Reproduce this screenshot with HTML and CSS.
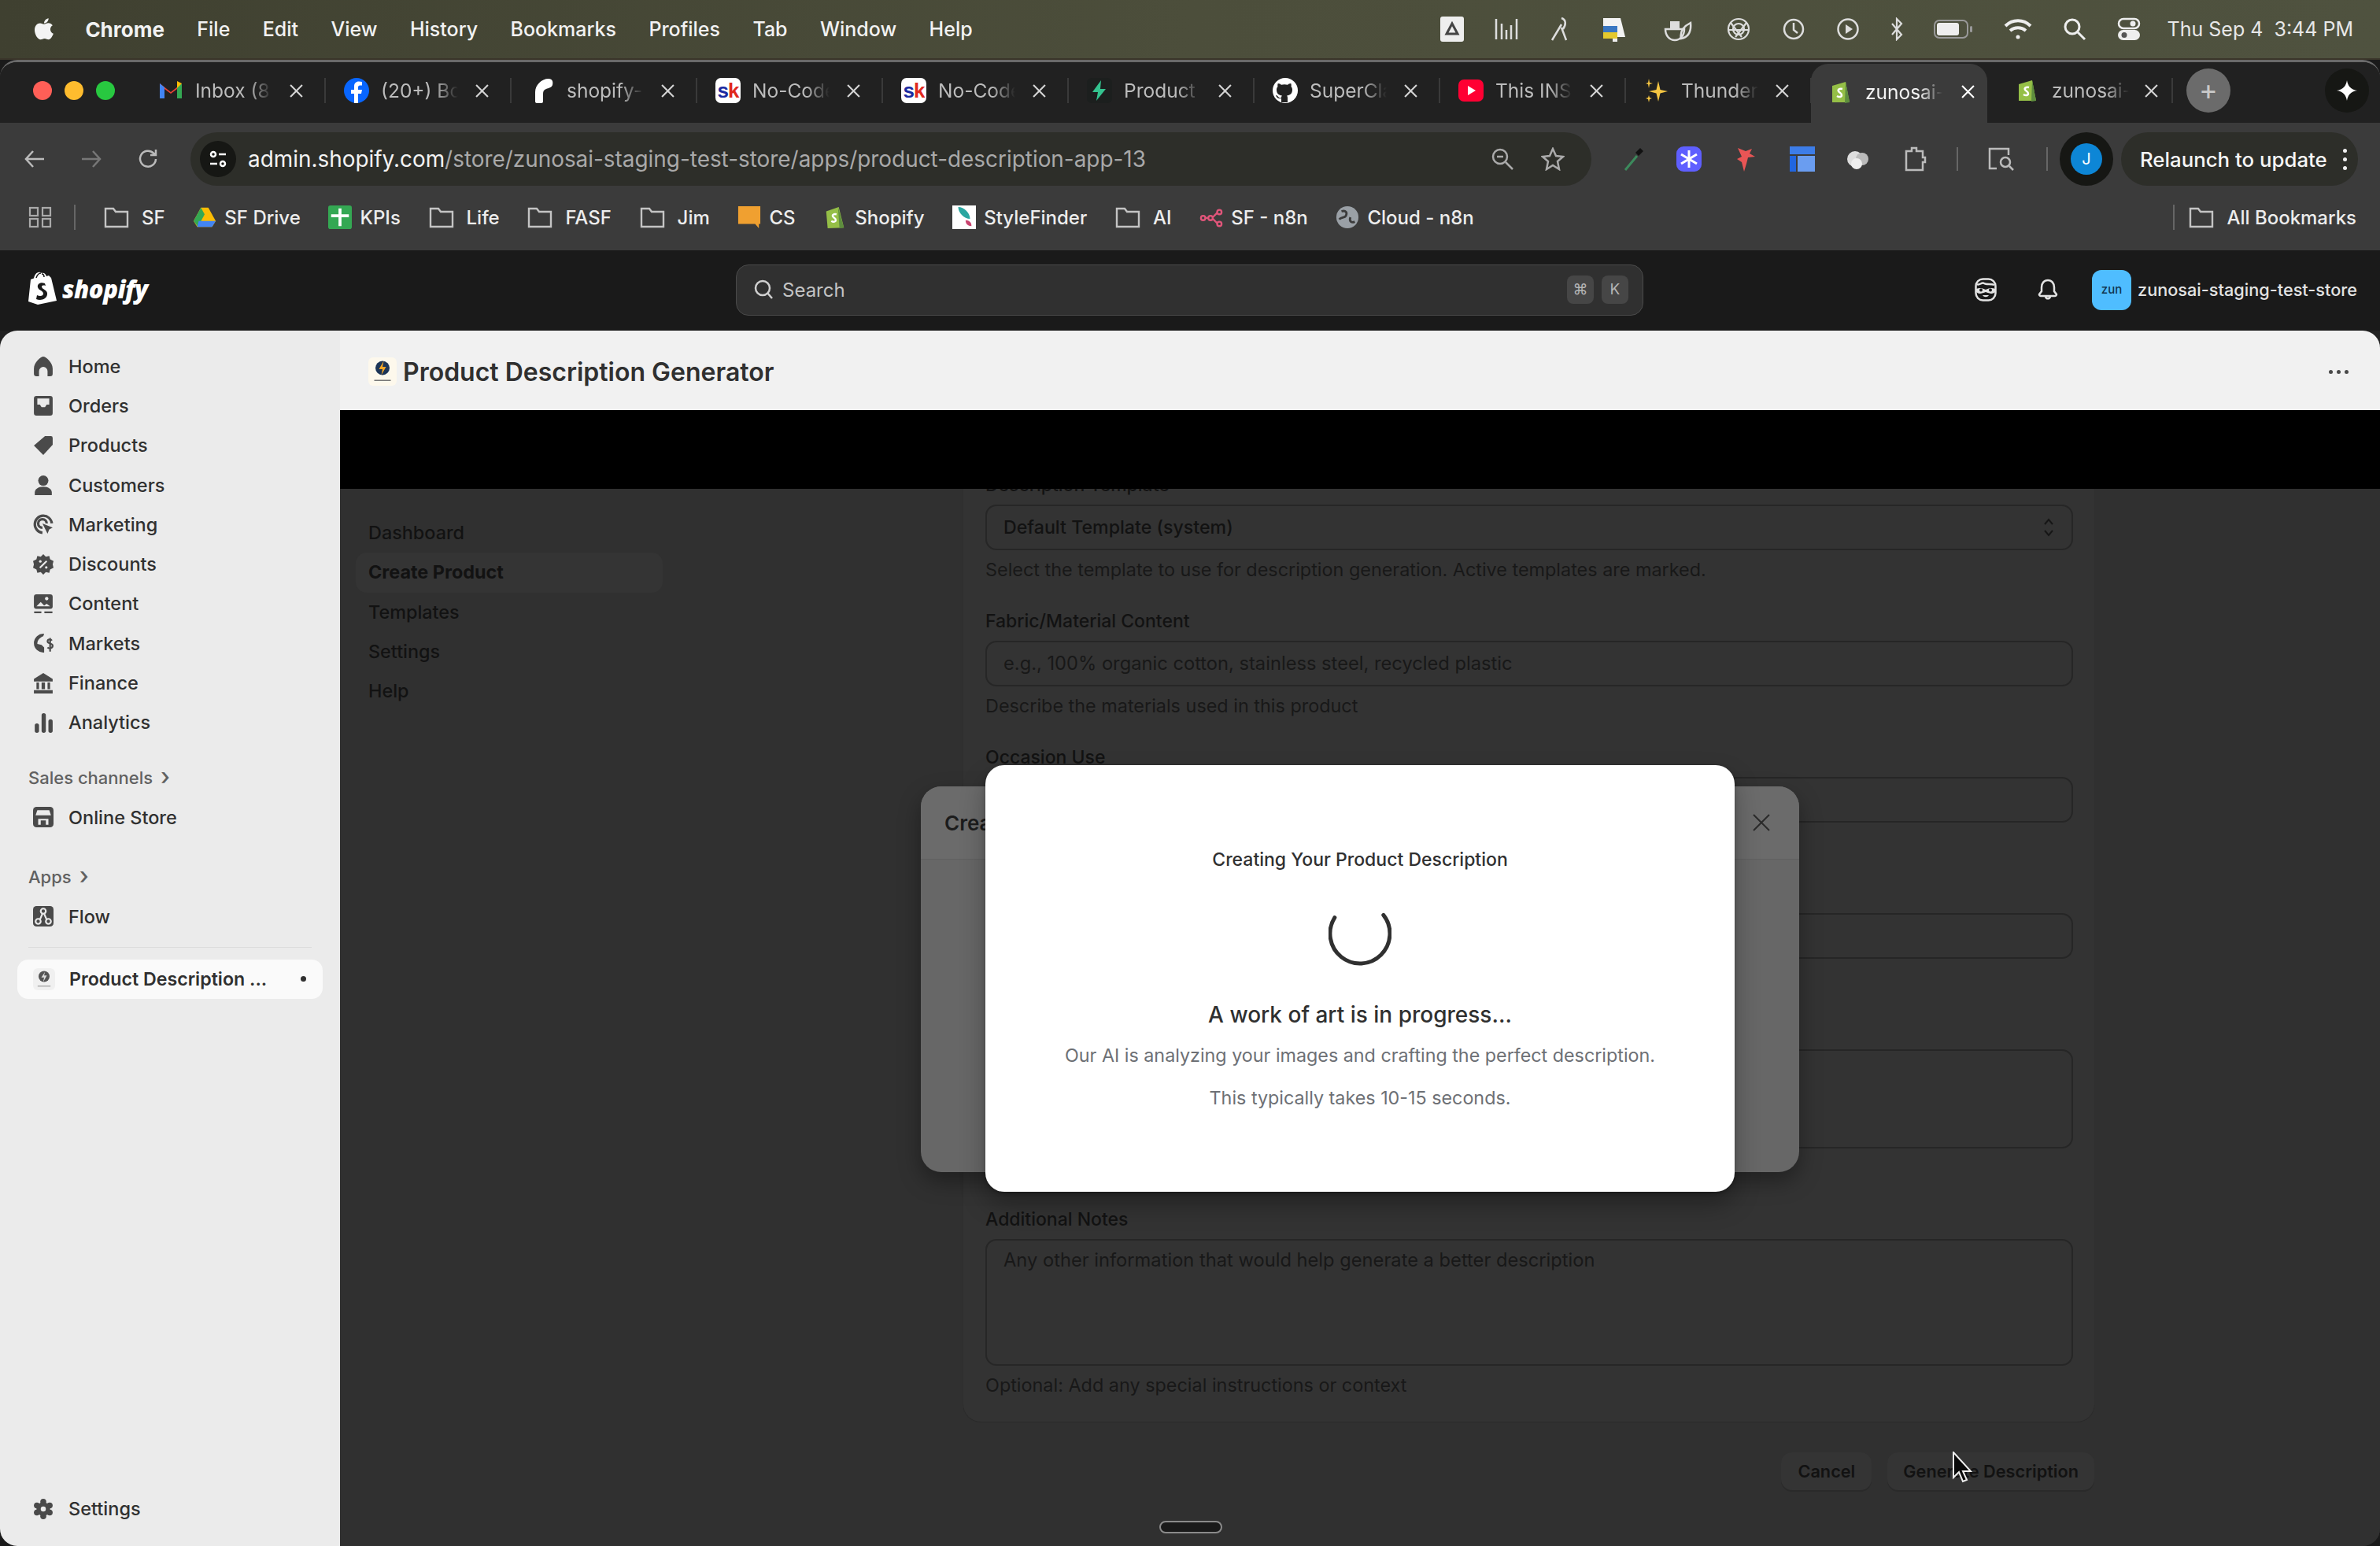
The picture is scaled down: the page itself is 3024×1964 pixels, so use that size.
FILE: index.html
```html
<!DOCTYPE html>
<html>
<head>
  <title>Product Description Generator</title>
  <link rel="stylesheet" href="styles.css">
</head>
<body>

  <div class="menubar">
    <svg class="apple" viewBox="0 0 24 28"><path d="M17 2c0 3-2.200 5.500-5 5.500C12 4.500 14.400 2.300 17 2zM12 8.500c1.300 0 2.700-1.200 4.800-1.200 1.800 0 3.600.9 4.700 2.500-3.800 2.200-3.200 7.600.9 9.200-1.100 2.800-3.100 6.500-5.400 6.500-1.700 0-2.400-1.100-4.400-1.100s-2.800 1.100-4.400 1.100C4.700 25.500 1.500 19.500 1.500 15c0-4.700 3-7.600 6-7.600 1.900 0 3.300 1.100 4.500 1.100z"/></svg>
    <span class="app-name">Chrome</span>
    <span>File</span><span>Edit</span><span>View</span><span>History</span><span>Bookmarks</span><span>Profiles</span><span>Tab</span><span>Window</span><span>Help</span>
    <div class="status">
      <svg width="30" height="32" viewBox="0 0 30 32"><rect x="0" y="0" width="30" height="32" rx="3" fill="#eee"/><path d="M15 9l7 13H8z" fill="none" stroke="#444" stroke-width="3"/></svg>
      <svg width="30" height="30" viewBox="0 0 30 30" fill="none" stroke="#ddd" stroke-width="2.500"><path d="M2 2v26M9 8v20M15 16v12M21 10v18M28 2v26"/></svg>
      <svg width="28" height="32" viewBox="0 0 28 32" fill="none" stroke="#ddd" stroke-width="2.500"><path d="M4 30L16 10M16 2c6 2 6 8 2 14M16 14l6 16"/></svg>
      <svg width="32" height="32" viewBox="0 0 32 32"><path d="M2 2h22l6 24H2z" fill="#f3f3f3"/><rect x="2" y="12" width="18" height="8" fill="#3a77c2"/><rect x="2" y="20" width="18" height="8" fill="#e4c92e"/><path d="M14 28h6v4h-6z" fill="#eee"/></svg>
      <svg class="status-wide" width="36" height="32" viewBox="0 0 36 32"><rect x="8" y="6" width="12" height="10" fill="#ddd"/><path d="M2 16h24c0 8-5 14-12 14S2 24 2 16z" fill="none" stroke="#ddd" stroke-width="2.500"/><path d="M22 28c-2-10 4-16 12-20 1 10-2 18-12 20z" fill="none" stroke="#ddd" stroke-width="2.500"/></svg>
      <svg class="status-wide-2" width="32" height="32" viewBox="0 0 32 32" fill="none" stroke="#ddd" stroke-width="2.200"><circle cx="16" cy="16" r="13"/><circle cx="16" cy="16" r="7"/><path d="M6 8l14 18M26 8L12 26M3 17h26"/></svg>
      <svg width="30" height="30" viewBox="0 0 30 30" fill="none" stroke="#ddd" stroke-width="2.500"><circle cx="15" cy="15" r="12"/><path d="M15 7v9l5 4"/></svg>
      <svg width="30" height="30" viewBox="0 0 30 30"><circle cx="15" cy="15" r="12.500" fill="none" stroke="#ddd" stroke-width="2.500"/><path d="M12 9l9 6-9 6z" fill="#ddd"/></svg>
      <svg width="16" height="30" viewBox="0 0 16 30" fill="none" stroke="#ddd" stroke-width="2.200"><path d="M2 8l12 14-6 6V2l6 6L2 22"/></svg>
      <svg width="50" height="26" viewBox="0 0 50 26"><rect x="1" y="2" width="42" height="22" rx="6" fill="none" stroke="#999" stroke-width="2"/><rect x="4" y="5" width="28" height="16" rx="3" fill="#eee"/><rect x="46" y="9" width="3" height="8" rx="1.500" fill="#999"/></svg>
      <svg width="36" height="28" viewBox="0 0 36 28" fill="none" stroke="#eee" stroke-width="4"><path d="M2 10c9-9 23-9 32 0M8 16c6-5 14-5 20 0"/><circle cx="18" cy="24" r="2.500" fill="#eee" stroke="none"/></svg>
      <svg width="30" height="30" viewBox="0 0 30 30" fill="none" stroke="#eee" stroke-width="3"><circle cx="12" cy="12" r="9"/><path d="M19 19l9 9"/></svg>
      <svg width="30" height="30" viewBox="0 0 30 30"><rect x="2" y="2" width="26" height="12" rx="6" fill="none" stroke="#eee" stroke-width="2.500"/><circle cx="20" cy="8" r="3.500" fill="#eee"/><rect x="1" y="16" width="28" height="13" rx="6.500" fill="#eee"/><circle cx="9" cy="22.500" r="3.500" fill="#555"/></svg>
      <span class="clock">Thu Sep 4&nbsp;&nbsp;3:44 PM</span>
    </div>
  </div>

  <div class="wallpaper"></div>

  <div class="window">
    <div class="tabstrip">
      <div class="lights"><i class="red"></i><i class="yellow"></i><i class="green"></i></div>

      <div class="tab">
        <svg class="fav" viewBox="0 0 32 32"><path d="M2 26V7l14 11L30 7v19h-6V14l-8 6-8-6v12z" fill="#ea4335"/><path d="M2 7v19h6V12z" fill="#4285f4"/><path d="M30 7v19h-6V12z" fill="#34a853"/><path d="M24 4l6 3-6 6z" fill="#fbbc04"/></svg>
        <span class="tab-title">Inbox (8</span><svg class="tab-x" viewBox="0 0 16 16"><path d="M1 1l14 14M15 1L1 15"/></svg>
      </div>
      <div class="tab">
        <svg class="fav" viewBox="0 0 32 32"><circle cx="16" cy="16" r="16" fill="#0866ff"/><path d="M18 32V20h4l1-5h-5v-3c0-1.500.7-2.500 2.500-2.500H23V5c-1-.2-2.500-.4-4-.4-3.800 0-6 2.300-6 6.200V15H9v5h4v12z" fill="#fff"/></svg>
        <span class="tab-title">(20+) Bo</span><svg class="tab-x" viewBox="0 0 16 16"><path d="M1 1l14 14M15 1L1 15"/></svg>
      </div>
      <div class="tab">
        <svg class="fav" viewBox="0 0 32 32"><path d="M24 1c5 0 6 4 5 8-1 3-5 4-8 5-3 1-4 3-4 6v10c0 1-1 2-2 2H9c-1 0-2-1-2-2V18C7 9 15 1 24 1z" fill="#fff"/></svg>
        <span class="tab-title">shopify-</span><svg class="tab-x" viewBox="0 0 16 16"><path d="M1 1l14 14M15 1L1 15"/></svg>
      </div>
      <div class="tab">
        <span class="fav fav-sk"><b class="s">s</b><b class="k">k</b></span>
        <span class="tab-title">No-Code</span><svg class="tab-x" viewBox="0 0 16 16"><path d="M1 1l14 14M15 1L1 15"/></svg>
      </div>
      <div class="tab">
        <span class="fav fav-sk"><b class="s">s</b><b class="k">k</b></span>
        <span class="tab-title">No-Code</span><svg class="tab-x" viewBox="0 0 16 16"><path d="M1 1l14 14M15 1L1 15"/></svg>
      </div>
      <div class="tab">
        <svg class="fav" viewBox="0 0 32 32"><rect width="32" height="32" rx="6" fill="#1c1f1e"/><path d="M18 3L7 18h7l-2 11 12-15h-7z" fill="#34c38f"/></svg>
        <span class="tab-title">Product</span><svg class="tab-x" viewBox="0 0 16 16"><path d="M1 1l14 14M15 1L1 15"/></svg>
      </div>
      <div class="tab">
        <svg class="fav" viewBox="0 0 32 32"><circle cx="16" cy="16" r="16" fill="#fff"/><path d="M11 31v-5c-5 1-6-2-7-4 2 0 3 2 4 3 1 .5 2 .5 3 0 0-1 .5-2 1-2.500-4-.5-7-2.500-7-7.500 0-1.800.6-3 1.500-4-.2-.8-.4-2.300.2-4 2 0 3.500 1 4.300 1.700 2.500-.7 5.500-.7 8 0 .8-.7 2.300-1.700 4.300-1.700.6 1.700.4 3.200.2 4 .9 1 1.500 2.200 1.500 4 0 5-3 7-7 7.500.7.700 1 1.800 1 3V31z" fill="#212121"/></svg>
        <span class="tab-title">SuperCla</span><svg class="tab-x" viewBox="0 0 16 16"><path d="M1 1l14 14M15 1L1 15"/></svg>
      </div>
      <div class="tab">
        <svg class="fav" viewBox="0 0 32 32"><rect y="2" width="32" height="28" rx="7" fill="#ff0033"/><path d="M12 10l10 6-10 6z" fill="#fff"/></svg>
        <span class="tab-title">This INS</span><svg class="tab-x" viewBox="0 0 16 16"><path d="M1 1l14 14M15 1L1 15"/></svg>
      </div>
      <div class="tab">
        <svg class="fav" viewBox="0 0 32 32" fill="#f4c542"><path d="M18 4l2.500 11L30 17l-9.500 2.500L18 30l-2.500-10.500L6 17l9.500-2z"/><path d="M6 1l1 5 4 1-4 1-1 5-1-5-3-1 3-1z"/><path d="M6 22l1 3 3 1-3 1-1 4-1-4-3-1 3-1z"/></svg>
        <span class="tab-title">Thunder</span><svg class="tab-x" viewBox="0 0 16 16"><path d="M1 1l14 14M15 1L1 15"/></svg>
      </div>
      <div class="tab tab-active">
        <svg class="fav" viewBox="0 0 32 32"><path d="M5 8l17-5 5 26-22 0z" fill="#95bf47"/><path d="M22 3l5 26-6 1z" fill="#5e8e3e"/><path d="M18 12c-4-1-6 1-5 3 1 2 4 2 4 5 0 2-3 3-6 1" fill="none" stroke="#fff" stroke-width="2.500"/></svg>
        <span class="tab-title">zunosai-</span><svg class="tab-x" viewBox="0 0 16 16"><path d="M1 1l14 14M15 1L1 15"/></svg>
      </div>
      <div class="tab tab-last">
        <svg class="fav" viewBox="0 0 32 32"><path d="M5 8l17-5 5 26-22 0z" fill="#95bf47"/><path d="M22 3l5 26-6 1z" fill="#5e8e3e"/><path d="M18 12c-4-1-6 1-5 3 1 2 4 2 4 5 0 2-3 3-6 1" fill="none" stroke="#fff" stroke-width="2.500"/></svg>
        <span class="tab-title">zunosai-</span><svg class="tab-x" viewBox="0 0 16 16"><path d="M1 1l14 14M15 1L1 15"/></svg>
      </div>
      <div class="new-tab">+</div>
      <div class="gemini">
        <svg width="26" height="26" viewBox="0 0 26 26"><path d="M13 0c1 7 5 12 13 13-8 1-12 6-13 13-1-7-5-12-13-13 8-1 12-6 13-13z" fill="#fff"/></svg>
      </div>
    </div>

    <div class="toolbar">
      <svg class="nav-btn" width="28" height="28" viewBox="0 0 28 28" fill="none" stroke="#bbb" stroke-width="2.500"><path d="M26 14H3M12 4L3 14l9 10"/></svg>
      <svg class="nav-btn" width="28" height="28" viewBox="0 0 28 28" fill="none" stroke="#777" stroke-width="2.500"><path d="M2 14h23M16 4l9 10-9 10"/></svg>
      <svg class="nav-btn" width="28" height="28" viewBox="0 0 28 28" fill="none" stroke="#bbb" stroke-width="2.500"><path d="M24 14a10 10 0 1 1-3-7.500l3 2.500M24 2v7h-7"/></svg>
      <div class="omnibox">
        <span class="site-info">
          <svg width="24" height="24" viewBox="0 0 24 24" fill="none" stroke="#fff" stroke-width="2.500"><circle cx="6" cy="6" r="3"/><path d="M13 6h9M2 18h9"/><circle cx="18" cy="18" r="3"/></svg>
        </span>
        <span class="url">admin.shopify.com<em>/store/zunosai-staging-test-store/apps/product-description-app-13</em></span>
        <svg class="omni-icon" width="30" height="30" viewBox="0 0 30 30" fill="none" stroke="#aaa" stroke-width="2.500"><circle cx="12" cy="12" r="9"/><path d="M19 19l9 9M8 12h8"/></svg>
        <svg class="omni-icon" width="30" height="30" viewBox="0 0 30 30" fill="none" stroke="#aaa" stroke-width="2.500"><path d="M15 2l4 9 9 1-7 6 2 10-8-5-8 5 2-10-7-6 9-1z"/></svg>
      </div>
      <div class="extensions">
        <svg width="28" height="32" viewBox="0 0 28 32"><path d="M3 30L18 12" stroke="#3c8a5c" stroke-width="3"/><path d="M16 8l6-6 4 4-6 6z" fill="#111"/></svg>
        <svg width="32" height="32" viewBox="0 0 32 32"><rect width="32" height="32" rx="9" fill="#5f5fff"/><path d="M16 5v22M6 10l20 12M26 10L6 22" stroke="#fff" stroke-width="3"/></svg>
        <svg width="32" height="34" viewBox="0 0 32 34"><path d="M6 3l10 4 8-3-3 6 7 4-9 1-2 8-3 10-3-12-6-4 6-3z" fill="#e95555"/></svg>
        <svg width="32" height="32" viewBox="0 0 32 32"><rect width="32" height="10" fill="#3d7de8"/><rect y="12" width="8" height="20" fill="#2166e0"/><rect x="10" y="12" width="22" height="20" fill="#6a9df0"/></svg>
        <svg width="32" height="32" viewBox="0 0 32 32"><circle cx="11" cy="16" r="10" fill="#ddd"/><circle cx="20" cy="16" r="8" fill="#bbb"/><circle cx="13" cy="22" r="7" fill="#eee"/></svg>
        <svg width="30" height="32" viewBox="0 0 30 32" fill="none" stroke="#bbb" stroke-width="2.500"><path d="M4 6h7V2h6v4h8v8h3v6h-3v10H4z"/></svg>
        <i class="tool-sep"></i>
        <svg width="36" height="32" viewBox="0 0 36 32" fill="none" stroke="#bbb" stroke-width="2.500"><path d="M11 28H2V3h24v8"/><circle cx="22" cy="20" r="6"/><path d="M27 25l5 5"/></svg>
        <i class="tool-sep"></i>
      </div>
      <span class="profile"><b>J</b></span>
      <div class="relaunch">Relaunch to update<span class="kebab"><i></i><i></i><i></i></span></div>
    </div>

    <div class="bookmarks">
      <svg class="apps-grid" width="32" height="28" viewBox="0 0 32 28" fill="none" stroke="#aaa" stroke-width="2.200"><rect x="2" y="2" width="10" height="10"/><rect x="18" y="2" width="10" height="10"/><rect x="2" y="16" width="10" height="10"/><rect x="18" y="16" width="10" height="10"/></svg>
      <i class="bm-sep"></i>
      <span class="bm"><svg class="folder" viewBox="0 0 32 28"><path d="M2 3h10l3 4h15v19H2z"/></svg>SF</span>
      <span class="bm"><svg class="bm-icon" viewBox="0 0 32 28"><path d="M11 1h10l10 18-5 8H6l-5-8z" fill="#fbbc04"/><path d="M11 1l5 9-9 17-6-8z" fill="#34a853"/><path d="M8 19h23l-5 8H6z" fill="#4285f4"/></svg>SF Drive</span>
      <span class="bm"><svg class="bm-icon" viewBox="0 0 32 32"><rect width="32" height="32" rx="3" fill="#34a853"/><path d="M14 4h4v24h-4zM4 12h24v4H4z" fill="#fff"/></svg>KPIs</span>
      <span class="bm"><svg class="folder" viewBox="0 0 32 28"><path d="M2 3h10l3 4h15v19H2z"/></svg>Life</span>
      <span class="bm"><svg class="folder" viewBox="0 0 32 28"><path d="M2 3h10l3 4h15v19H2z"/></svg>FASF</span>
      <span class="bm"><svg class="folder" viewBox="0 0 32 28"><path d="M2 3h10l3 4h15v19H2z"/></svg>Jim</span>
      <span class="bm"><svg class="bm-icon" viewBox="0 0 32 32"><path d="M1 1h30v24h-2v6l-5-6H1z" fill="#f0a030"/></svg>CS</span>
      <span class="bm"><svg class="bm-icon" viewBox="0 0 32 32"><path d="M4 8l17-6 7 28-22 1z" fill="#95bf47"/><path d="M20 2l8 28-6 1z" fill="#5e8e3e"/><path d="M18 12c-4-1-6 1-5 3 1 2 4 2 4 5 0 2-3 3-6 1" fill="none" stroke="#fff" stroke-width="2.500"/></svg>Shopify</span>
      <span class="bm"><svg class="bm-icon" viewBox="0 0 32 32"><rect width="32" height="32" fill="#fff"/><path d="M8 2c8 0 16 8 16 16-8 0-16-8-16-16z" fill="#2aa6a0"/><path d="M18 20c5 0 8 3 8 8-5 0-8-3-8-8z" fill="#c9446f"/></svg>StyleFinder</span>
      <span class="bm"><svg class="folder" viewBox="0 0 32 28"><path d="M2 3h10l3 4h15v19H2z"/></svg>AI</span>
      <span class="bm"><svg class="bm-icon" viewBox="0 0 32 32" fill="none" stroke="#e0557a" stroke-width="2.500"><circle cx="5" cy="17" r="3"/><circle cx="15" cy="17" r="3"/><circle cx="27" cy="9" r="3"/><circle cx="27" cy="25" r="3"/><path d="M8 17h4M18 16l6-6M18 18l6 6"/></svg>SF - n8n</span>
      <span class="bm"><svg class="bm-icon" viewBox="0 0 32 32"><circle cx="16" cy="16" r="15" fill="#9aa0a6"/><path d="M8 8c6-2 8 2 6 6-2 3-7 2-9 5M26 22c-4 2-8 0-6-6" fill="none" stroke="#3b3b3b" stroke-width="3"/></svg>Cloud - n8n</span>
      <i class="bm-sep bm-sep-right"></i>
      <span class="bm"><svg class="folder" viewBox="0 0 32 28"><path d="M2 3h10l3 4h15v19H2z"/></svg>All Bookmarks</span>
    </div>

    <div class="topbar">
      <div class="logo">
        <svg width="38" height="44" viewBox="0 0 38 44"><path d="M3 10l4-1.500C8 4 11 0 15 1c1 .1 1.500.5 2 1 3-1 5 1 6 4l3-1 3 3 7 29-24 5L0 38z" fill="#fff"/><path d="M21 15c-6-2-10 1-9 5 1 4 7 4 7 8 0 3-4 4-8 2l-1 5c5 2 13 1 14-6 1-6-7-6-7-10 0-1 2-2 5-1z" fill="#1a1a1a"/><path d="M10 8c1-3 3-6 6-6M17 3c2 0 3 2 3 4" fill="none" stroke="#1a1a1a" stroke-width="1.500"/></svg>
        <span class="wordmark">shopify</span>
      </div>
      <div class="search">
        <svg width="26" height="26" viewBox="0 0 26 26" fill="none" stroke="#d0d0d0" stroke-width="2.500"><circle cx="11" cy="11" r="9"/><path d="M17 17l6 7"/></svg>
        <span class="search-text">Search</span>
        <span class="key">⌘</span><span class="key">K</span>
      </div>
      <div class="top-right">
        <svg width="28" height="30" viewBox="0 0 28 30"><rect x="1.500" y="1.500" width="25" height="27" rx="9" fill="none" stroke="#e3e3e3" stroke-width="2.500"/><path d="M3 8c3 2 6-3 9-1 3 2 9 0 13 2" fill="none" stroke="#e3e3e3" stroke-width="2.500"/><path d="M2 14c4-2 8-1 12 1 4-2 8-3 12-1v4c-3 3-7 2-12 0-5 2-9 3-12 0z" fill="#e3e3e3"/><circle cx="8" cy="15.500" r="2" fill="#1a1a1a"/><circle cx="20" cy="15.500" r="2" fill="#1a1a1a"/><path d="M10 22c2 3 6 3 8 0z" fill="#e3e3e3"/></svg>
        <svg width="28" height="30" viewBox="0 0 28 30" fill="none" stroke="#e3e3e3" stroke-width="2.500"><path d="M14 3c5 0 8 4 8 9v5l3 4c0 1-1 2-2 2H5c-1 0-2-1-2-2l3-4v-5c0-5 3-9 8-9zM11 24c1 3 5 3 6 0"/></svg>
        <div class="store">
          <span class="store-badge">zun</span>
          <span>zunosai-staging-test-store</span>
        </div>
      </div>
    </div>

    <div class="admin">
      <div class="sidebar">
        <div class="nav-list">
          <div class="nav-item"><svg viewBox="0 0 24 24"><path d="M12 1c3 0 11 7 11 14v6a3 3 0 0 1-3 3h-3v-6a4 4 0 0 0-10 0v6H4a3 3 0 0 1-3-3v-6C1 8 9 1 12 1z"/></svg>Home</div>
          <div class="nav-item"><svg viewBox="0 0 24 24"><path d="M4 1h16a3 3 0 0 1 3 3v17a3 3 0 0 1-3 3H4a3 3 0 0 1-3-3V4a3 3 0 0 1 3-3zm1 3v7h3l2 3h4l2-3h3V4z"/></svg>Orders</div>
          <div class="nav-item"><svg viewBox="0 0 24 24"><path d="M14 1h7a2 2 0 0 1 2 2v8L12 23 1 12z"/></svg>Products</div>
          <div class="nav-item"><svg viewBox="0 0 24 24"><circle cx="12" cy="7" r="6"/><path d="M2 24v-3c0-4 4-7 10-7s10 3 10 7v3z"/></svg>Customers</div>
          <div class="nav-item"><svg viewBox="0 0 24 24"><g fill="none" stroke="#4a4a4a" stroke-width="3"><path d="M11 22a10 10 0 1 1 11-11"/><path d="M11 16a5 5 0 1 1 5-5"/></g><path d="M11 11l12 5-4 2-2 5z"/></svg>Marketing</div>
          <div class="nav-item"><svg viewBox="0 0 24 24"><path d="M12 0l3 3 4-1 1 4 4 2-1 4 1 4-4 2-1 4-4-1-3 3-3-3-4 1-1-4-4-2 1-4-1-4 4-2 1-4 4 1z"/><path d="M8 16l8-8" stroke="#ebebeb" stroke-width="2"/><circle cx="8.500" cy="8.500" r="1.500" fill="#ebebeb"/><circle cx="15.500" cy="15.500" r="1.500" fill="#ebebeb"/></svg>Discounts</div>
          <div class="nav-item"><svg viewBox="0 0 24 24"><rect x="1" y="1" width="22" height="17" rx="3"/><path d="M4 15l5-5 4 4 3-2 4 3z" fill="#ebebeb"/><circle cx="16" cy="6" r="2" fill="#ebebeb"/><rect x="1" y="21" width="9" height="2" rx="1"/><rect x="13" y="21" width="10" height="2" rx="1"/></svg>Content</div>
          <div class="nav-item"><svg viewBox="0 0 24 24"><path d="M13 1A11 11 0 0 0 1 12a11 11 0 0 0 12 11v-6l-3-3-5-1c0-5 4-8 7-9z"/><path d="M22 9c-1-2-5-2-5 1 0 3 6 2 6 5s-4 4-6 2M20 6v16" fill="none" stroke="#4a4a4a" stroke-width="2"/></svg>Markets</div>
          <div class="nav-item"><svg viewBox="0 0 24 24"><path d="M12 0l11 7v3H1V7z"/><path d="M4 11h3v8H4zM10 11h4v8h-4zM17 11h3v8h-3zM1 20h22v4H1z"/></svg>Finance</div>
          <div class="nav-item"><svg viewBox="0 0 24 24"><rect x="2" y="13" width="5" height="11" rx="2.500"/><rect x="10" y="1" width="5" height="23" rx="2.500"/><rect x="18" y="8" width="5" height="16" rx="2.500"/></svg>Analytics</div>
        </div>

        <div class="nav-head nav-head-sales">Sales channels<span class="chev">›</span></div>
        <div class="nav-item"><svg viewBox="0 0 24 24"><rect width="24" height="24" rx="4"/><path d="M5 4h14l2 6H3z" fill="#ebebeb"/><path d="M6 14h12v7h-3v-5H9v5H6z" fill="#ebebeb"/></svg>Online Store</div>

        <div class="nav-head nav-head-apps">Apps<span class="chev">›</span></div>
        <div class="nav-item"><svg viewBox="0 0 24 24"><rect width="24" height="24" rx="4"/><g fill="none" stroke="#ebebeb" stroke-width="2"><circle cx="12" cy="6" r="3"/><circle cx="6" cy="18" r="3"/><circle cx="18" cy="18" r="3"/><path d="M11 9l-3 7M13 9l3 7"/></g></svg>Flow</div>

        <div class="nav-rule"></div>

        <div class="nav-item nav-item-app">
          <span class="app-thumb app-thumb-grey"><svg viewBox="0 0 24 24"><circle cx="12" cy="9" r="6" fill="#555"/><path d="M13 4l-4 6h3l-1 5 4-7h-3z" fill="#ddd"/><path d="M5 19h14v1H5z" fill="#999"/></svg></span>
          <span class="app-name-side">Product Description ...</span>
          <i class="pin-dot"></i>
        </div>

        <div class="nav-item nav-settings"><svg viewBox="0 0 24 24"><g><circle cx="12" cy="3.500" r="3.500"/><circle cx="12" cy="20.500" r="3.500"/><circle cx="4.500" cy="7.800" r="3.500"/><circle cx="19.500" cy="7.800" r="3.500"/><circle cx="4.500" cy="16.200" r="3.500"/><circle cx="19.500" cy="16.200" r="3.500"/><circle cx="12" cy="12" r="8"/></g><circle cx="12" cy="12" r="3" fill="#ebebeb"/></svg>Settings</div>
      </div>

      <div class="main">
        <div class="titlebar">
          <span class="app-thumb app-thumb-title"><svg viewBox="0 0 24 24"><circle cx="12" cy="9" r="6" fill="#1d3557"/><path d="M13 3l-4 7h3l-1 5 4-7h-3z" fill="#f4a626"/><path d="M5 19h14v1H5z" fill="#777"/></svg></span>
          <h1>Product Description Generator</h1>
          <span class="more"><i></i><i></i><i></i></span>
        </div>
        <div class="blackband"></div>

        <div class="content">
          <div class="side-links">
            <div class="side-link">Dashboard</div>
            <div class="side-link side-link-on">Create Product</div>
            <div class="side-link">Templates</div>
            <div class="side-link">Settings</div>
            <div class="side-link">Help</div>
          </div>

          <div class="form-col">
            <div class="form-card">
              <div class="field">
                <label>Description Template</label>
                <div class="control control-select">Default Template (system)
                  <svg width="14" height="26" viewBox="0 0 14 26" fill="none" stroke="#161616" stroke-width="2"><path d="M2 9l5-6 5 6M2 17l5 6 5-6"/></svg>
                </div>
                <p class="help">Select the template to use for description generation. Active templates are marked.</p>
              </div>
              <div class="field">
                <label>Fabric/Material Content</label>
                <div class="control ph">e.g., 100% organic cotton, stainless steel, recycled plastic</div>
                <p class="help">Describe the materials used in this product</p>
              </div>
              <div class="field">
                <label>Occasion Use</label>
                <div class="control ph"></div>
                <p class="help"></p>
              </div>
              <div class="field">
                <label></label>
                <div class="control ph"></div>
                <p class="help"></p>
              </div>
              <div class="field">
                <label></label>
                <div class="control control-mid ph"></div>
                <p class="help"></p>
              </div>
              <div class="field">
                <label>Additional Notes</label>
                <div class="control control-notes ph">Any other information that would help generate a better description</div>
                <p class="help">Optional: Add any special instructions or context</p>
              </div>
            </div>
            <div class="form-actions">
              <div class="btn btn-cancel">Cancel</div>
              <div class="btn">Generate Description</div>
            </div>
          </div>

          <div class="scroll-pill"></div>
          <svg class="cursor" width="26" height="44" viewBox="0 0 26 44"><path d="M2 1v32l7-7 5 12 5-2-5-11h10z" fill="#0a0a0a" stroke="#eee" stroke-width="2"/></svg>
        </div>

        <div class="dialog-back">
          <div class="dialog-back-head"><span class="dialog-back-title">Create</span>
            <svg width="22" height="22" viewBox="0 0 22 22" fill="none" stroke="#2a2a2a" stroke-width="2"><path d="M1 1l20 20M21 1L1 21"/></svg>
          </div>
        </div>

        <div class="dialog-front">
          <div class="df-title">Creating Your Product Description</div>
          <svg class="spinner" width="80" height="80" viewBox="0 0 80 80" fill="none" stroke="#303030" stroke-width="5" stroke-linecap="round"><path d="M9 17a38 38 0 1 0 62 0" transform="rotate(-3 40 40)"/></svg>
          <div class="df-head">A work of art is in progress...</div>
          <p class="df-text">Our AI is analyzing your images and crafting the perfect description.</p>
          <p class="df-text">This typically takes 10-15 seconds.</p>
        </div>
      </div>
    </div>
  </div>

</body>
</html>
```

FILE: styles.css
```css
* {
  box-sizing: border-box;
}

html, body {
  margin: 0;
  height: 100%;
  overflow: hidden;
}

body {
  width: 3024px;
  height: 1964px;
  font-family: Inter, "Noto Sans", sans-serif;
  background: #1a1a1a;
  color: #303030;
}

/* mac menu bar */
.menubar {
  height: 74px;
  display: flex;
  align-items: center;
  gap: 41.400px;
  padding: 0 34px 0 42px;
  background: linear-gradient(90deg, #3f4030, #4c4e3b 50%, #4f523f);
  color: #f2f2f2;
  font-size: 25px;
  font-weight: 500;
}

.apple {
  width: 28px;
  height: 32px;
  fill: #f4f4f4;
  margin-right: -3px;
}

.app-name {
  font-size: 26px;
  font-weight: 700;
}

.status {
  margin-left: auto;
  display: flex;
  align-items: center;
  gap: 39px;
}

.status-wide {
  margin-left: 8px;
}

.status-wide-2 {
  margin-left: 4px;
}

.clock {
  margin-left: -5px;
  font-weight: 400;
  color: #e8e8e8;
}

.wallpaper {
  height: 2px;
  background: #3a352a;
}

/* chrome */
.window {
  height: 1888px;
  background: #212121;
  border-radius: 22px;
  border-top: 3px solid #6a6a6a;
  overflow: hidden;
  position: relative;
  display: flex;
  flex-direction: column;
}

.tabstrip {
  height: 77px;
  display: flex;
  align-items: center;
  padding-left: 42px;
  padding-bottom: 5px;
  background: #212121;
  flex: none;
}

.lights {
  display: flex;
  gap: 16px;
  width: 136px;
  flex: none;
}

.lights i {
  width: 24px;
  height: 24px;
  border-radius: 50%;
}

.red { background: #ff5f57; }
.yellow { background: #febc2e; }
.green { background: #28c840; }

.tab {
  width: 236px;
  height: 32px;
  padding: 0 0 0 23px;
  display: flex;
  align-items: center;
  flex: none;
  border-right: 2px solid #3a3a3a;
  font-size: 24.500px;
  color: #bcbcbc;
}

.fav {
  width: 32px;
  height: 32px;
  flex: none;
}

.fav-sk {
  background: #fff;
  border-radius: 7px;
  display: flex;
  align-items: center;
  justify-content: center;
  font: 700 26px "Liberation Sans", sans-serif;
  letter-spacing: -1px;
}

.fav-sk .s { color: #1a2aa0; }
.fav-sk .k { color: #e0281e; }

.tab-title {
  width: 98px;
  margin-left: 15px;
  flex: none;
  white-space: nowrap;
  -webkit-mask-image: linear-gradient(90deg, #000 70%, transparent);
  mask-image: linear-gradient(90deg, #000 70%, transparent);
}

.tab-x {
  width: 17px;
  height: 17px;
  margin-left: 22px;
  flex: none;
  fill: none;
  stroke: #d4d4d4;
  stroke-width: 2;
}

.tab-active {
  height: 75px;
  margin-top: 5px;
  width: 224px;
  padding-left: 22px;
  padding-bottom: 4px;
  background: #3b3b3b;
  border-radius: 22px 22px 0 0;
  border: 0;
  color: #f4f4f4;
  align-self: flex-end;
  margin-bottom: -5px;
  margin-left: -1px;
}

.tab-active .tab-x {
  margin-left: 24px;
  stroke: #fff;
}

.tab-last {
  width: 236px;
  padding-left: 35px;
}

.tab-last .tab-x {
  margin-left: 20px;
}

.new-tab {
  width: 56px;
  height: 56px;
  margin-left: 17px;
  border-radius: 50%;
  background: #6b6b6b;
  color: #c9c9c9;
  font-size: 36px;
  line-height: 54px;
  text-align: center;
  flex: none;
}

.gemini {
  width: 56px;
  height: 56px;
  margin-left: auto;
  margin-right: 14px;
  border-radius: 50%;
  background: #161714;
  display: flex;
  align-items: center;
  justify-content: center;
}

.toolbar {
  height: 92px;
  flex: none;
  display: flex;
  align-items: center;
  background: #3b3b3b;
  padding: 0 10px 0 30px;
}

.nav-btn {
  margin-right: 44px;
  flex: none;
}

.nav-btn:nth-child(3) {
  margin-right: 40px;
}

.omnibox {
  width: 1780px;
  height: 68px;
  flex: none;
  display: flex;
  align-items: center;
  background: #2d2e29;
  border-radius: 34px;
  padding-left: 12px;
}

.site-info {
  width: 46px;
  height: 46px;
  border-radius: 50%;
  background: #161714;
  display: flex;
  align-items: center;
  justify-content: center;
  flex: none;
}

.url {
  margin-left: 15px;
  font-size: 27.900px;
  color: #f3f3f3;
  white-space: nowrap;
}

.url em {
  font-style: normal;
  color: #a9a9a9;
}

.omni-icon {
  flex: none;
  margin-left: 34px;
}

.url + .omni-icon {
  margin-left: auto;
}

.omni-icon:last-child {
  margin-right: 34px;
}

.extensions {
  display: flex;
  align-items: center;
  gap: 40px;
  margin-left: 40px;
  flex: none;
}

.tool-sep {
  width: 2px;
  height: 30px;
  background: #666;
  margin: 0 -2px;
}

.profile {
  width: 68px;
  height: 68px;
  margin-left: 17px;
  border-radius: 50%;
  background: #161714;
  display: flex;
  align-items: center;
  justify-content: center;
  flex: none;
}

.profile b {
  width: 40px;
  height: 40px;
  border-radius: 50%;
  background: #0d86d6;
  color: #fff;
  font-size: 20px;
  font-weight: 400;
  line-height: 40px;
  text-align: center;
}

.relaunch {
  height: 68px;
  margin-left: 10px;
  padding: 0 14px 0 24px;
  display: flex;
  align-items: center;
  flex: none;
  background: #2d2e29;
  border-radius: 34px;
  color: #f6f6f6;
  font-size: 25.800px;
  font-weight: 500;
  white-space: nowrap;
}

.kebab {
  display: flex;
  flex-direction: column;
  gap: 6px;
  margin-left: 20px;
}

.kebab i {
  width: 5px;
  height: 5px;
  border-radius: 50%;
  background: #f0f0f0;
}

.bookmarks {
  height: 70px;
  flex: none;
  display: flex;
  align-items: center;
  background: #3b3b3b;
  padding: 0 30px 14px 36px;
  color: #ededed;
  font-size: 24px;
  font-weight: 500;
  white-space: nowrap;
}

.apps-grid {
  flex: none;
}

.bm-sep {
  width: 2px;
  height: 32px;
  background: #666;
  margin: 0 36px 0 26px;
  flex: none;
}

.bm-sep-right {
  margin-left: auto;
  margin-right: 18px;
}

.bm {
  display: flex;
  align-items: center;
  gap: 10px;
  margin-right: 35.700px;
}

.bm:last-child {
  margin-right: 0;
}

.folder {
  width: 32px;
  height: 28px;
  margin-right: 6px;
  fill: none;
  stroke: #c4c4c4;
  stroke-width: 2.400;
}

.bm-icon {
  width: 30px;
  height: 32px;
}

/* shopify top bar */
.topbar {
  height: 102px;
  flex: none;
  display: flex;
  align-items: center;
  background: #1a1a1a;
  padding: 0 29px 2px 36px;
}

.logo {
  display: flex;
  align-items: center;
  gap: 5px;
  width: 899px;
  margin-top: -2px;
}

.wordmark {
  font-family: "Open Sans", sans-serif;
  font-style: italic;
  font-weight: 800;
  font-size: 31px;
  letter-spacing: -.5px;
  color: #fff;
}

.search {
  width: 1153px;
  height: 65px;
  flex: none;
  display: flex;
  align-items: center;
  gap: 8px;
  padding: 0 18px 0 22px;
  background: #303030;
  border: 1px solid #4a4a4a;
  border-radius: 16px;
  color: #c4c4c4;
  font-size: 24px;
}

.search-text {
  margin-right: auto;
  margin-left: 2px;
}

.key {
  width: 34px;
  height: 36px;
  margin-left: -4px;
  border-radius: 8px;
  background: #464646;
  font-size: 19px;
  line-height: 36px;
  text-align: center;
  color: #b5b5b5;
}

.key + .key {
  margin-left: 2px;
}

.top-right {
  margin-left: auto;
  display: flex;
  align-items: center;
  gap: 51px;
}

.store {
  display: flex;
  align-items: center;
  gap: 8px;
  margin-left: -9px;
  color: #e3e3e3;
  font-size: 21.700px;
  font-weight: 500;
}

.store-badge {
  width: 50px;
  height: 51px;
  border-radius: 12px;
  background: #4fbdff;
  color: #11364f;
  font-size: 15px;
  line-height: 49px;
  text-align: center;
}

/* admin */
.admin {
  flex: 1;
  min-height: 0;
  display: flex;
  background: #303030;
  border-radius: 22px 22px 0 0;
  overflow: hidden;
  position: relative;
}

.sidebar {
  width: 432px;
  flex: none;
  background: #ebebeb;
  padding: 20px 22px 0;
  position: relative;
}

.nav-list {
  display: flex;
  flex-direction: column;
}

.nav-item {
  height: 50.300px;
  display: flex;
  align-items: center;
  gap: 19px;
  padding-left: 20px;
  font-size: 23.500px;
  font-weight: 500;
  color: #303030;
  white-space: nowrap;
}

.nav-item > svg {
  width: 26px;
  height: 26px;
  fill: #4a4a4a;
  flex: none;
}

.nav-head {
  display: flex;
  align-items: center;
  gap: 10px;
  height: 40px;
  padding-left: 14px;
  color: #616161;
  font-size: 22px;
  font-weight: 500;
}

.nav-head-sales {
  margin-top: 25px;
  margin-bottom: 5px;
}

.nav-head-apps {
  margin-top: 31px;
  margin-bottom: 5px;
}

.chev {
  font-size: 30px;
  line-height: 30px;
  margin-top: -4px;
}

.nav-rule {
  height: 1px;
  background: #dcdcdc;
  margin: 13px 14px 15px;
}

.nav-item-app {
  height: 50px;
  gap: 18px;
  background: #fafafa;
  border-radius: 14px;
  font-size: 23.200px;
  font-weight: 600;
  padding-right: 18px;
}

.app-thumb {
  width: 28px;
  height: 28px;
  flex: none;
  border-radius: 6px;
  background: #f0f0f0;
}

.app-thumb svg {
  display: block;
  width: 100%;
  height: 100%;
}

.app-thumb-title {
  width: 36px;
  height: 36px;
  background: #fdf8ec;
}

.app-name-side {
  flex: 1;
}

.pin-dot {
  width: 7px;
  height: 7px;
  border-radius: 50%;
  background: #303030;
  margin-right: 3px;
}

.nav-settings {
  position: absolute;
  left: 22px;
  right: 22px;
  bottom: 22px;
}

.main {
  flex: 1;
  min-width: 0;
  display: flex;
  flex-direction: column;
  position: relative;
}

.titlebar {
  height: 101px;
  flex: none;
  display: flex;
  align-items: center;
  padding: 3px 40px 0 36px;
  background: #f1f1f1;
}

.titlebar h1 {
  margin: 0 0 0 8px;
  font-size: 32px;
  font-weight: 600;
  color: #303030;
}

.more {
  margin-left: auto;
  display: flex;
  gap: 5px;
}

.more i {
  width: 5px;
  height: 5px;
  border-radius: 50%;
  background: #4a4a4a;
}

.blackband {
  height: 100px;
  flex: none;
  background: #000;
  position: relative;
  z-index: 1;
}

/* content sits behind the backdrop, so its colours are already dimmed */
.content {
  flex: 1;
  min-height: 0;
  display: flex;
  background: #303030;
  position: relative;
  overflow: hidden;
  color: #121212;
  font-size: 23.400px;
}

.side-links {
  width: 1000px;
  flex: none;
  padding: 31px 0 0 20px;
}

.side-link {
  width: 390px;
  height: 50.300px;
  line-height: 50px;
  padding-left: 16px;
  font-weight: 500;
  color: #121212;
}

.side-link-on {
  font-weight: 700;
  background: #343434;
  border-radius: 14px;
}

.form-col {
  width: 1437px;
  flex: none;
  margin-left: -208px;
  margin-top: -50px;
}

.form-card {
  background: #333;
  border-radius: 0 0 22px 22px;
  box-shadow: 0 1px 0 #2a2a2a, 0 0 0 1px #2f2f2f;
  padding: 29px 27px 30px 28px;
  display: flex;
  flex-direction: column;
  gap: 33px;
}

.field label {
  display: block;
  height: 32px;
  line-height: 32px;
  margin-bottom: 9px;
  font-size: 23px;
  font-weight: 500;
}

.control {
  height: 58px;
  line-height: 54px;
  padding: 0 21px;
  border: 2px solid #262626;
  border-radius: 14px;
  background: #333;
  white-space: nowrap;
}

.control-select {
  display: flex;
  align-items: center;
  justify-content: space-between;
  padding-right: 22px;
  font-size: 23.200px;
  font-weight: 500;
}

.control-mid {
  height: 126px;
}

.control-notes {
  height: 161px;
  line-height: 30px;
  padding-top: 10px;
}

.ph {
  color: #181818;
  font-size: 23.700px;
}

.help {
  height: 32px;
  margin: 9px 0 0;
  line-height: 32px;
  color: #181818;
}

.form-actions {
  display: flex;
  justify-content: flex-end;
  gap: 20px;
  margin-top: 39px;
}

.btn {
  height: 48px;
  padding: 0 20px;
  border-radius: 14px;
  background: #343434;
  box-shadow: 0 2px 0 #2a2a2a;
  font-size: 21.700px;
  font-weight: 600;
  line-height: 48px;
  color: #121212;
}

.btn-cancel {
  width: 115px;
  padding: 0;
  text-align: center;
}

.scroll-pill {
  position: absolute;
  left: 1041px;
  top: 1311px;
  width: 80px;
  height: 16px;
  background: #1a1a1a;
  border: 2px solid #8a8a8a;
  border-radius: 8px;
}

.cursor {
  position: absolute;
  left: 2048px;
  top: 1223px;
}

/* dialogs over the page */
.dialog-back {
  position: absolute;
  left: 738px;
  top: 579px;
  width: 1116px;
  height: 490px;
  background: #676767;
  border-radius: 26px;
  box-shadow: 0 12px 28px rgba(0, 0, 0, .35);
  z-index: 2;
  overflow: hidden;
}

.dialog-back-head {
  height: 93px;
  display: flex;
  align-items: center;
  justify-content: space-between;
  padding: 0 37px 0 30px;
  background: #6b6b6b;
  border-bottom: 1px solid #616161;
  font-size: 26px;
  font-weight: 600;
  color: #1c1c1c;
}

.dialog-front {
  position: absolute;
  left: 820px;
  top: 552px;
  width: 952px;
  height: 542px;
  padding-top: 104px;
  background: #fff;
  border-radius: 24px;
  box-shadow: 0 2px 4px rgba(0, 0, 0, .25), 0 16px 32px rgba(0, 0, 0, .3);
  z-index: 3;
  text-align: center;
  color: #303030;
}

.df-title {
  height: 32px;
  line-height: 32px;
  font-size: 23px;
  font-weight: 500;
}

.spinner {
  display: block;
  margin: 39px auto 0;
}

.df-head {
  margin-top: 42px;
  font-size: 28px;
  font-weight: 500;
  line-height: 40px;
}

.df-text {
  margin: 20px 0 0;
  font-size: 23.300px;
  line-height: 34px;
  color: #6d7075;
}

.df-head + .df-text {
  margin-top: 15px;
}
```
